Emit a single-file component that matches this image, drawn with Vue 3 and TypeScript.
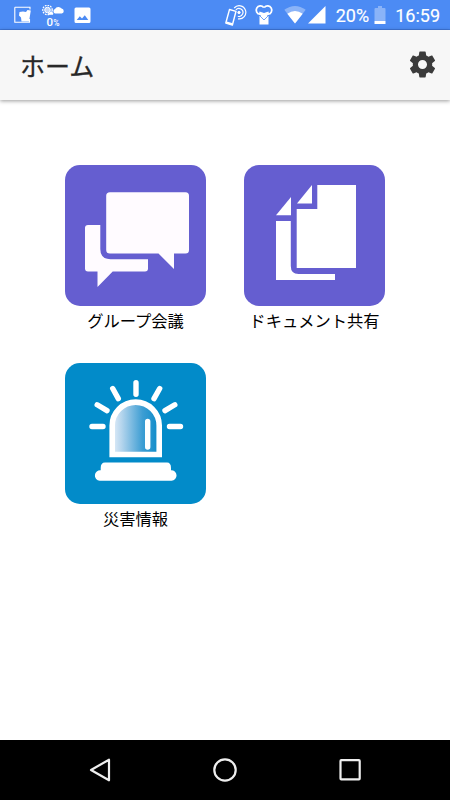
<script setup lang="ts">
interface Tile {
  id: 'meeting' | 'documents' | 'disaster'
  label: string
}

const title = 'ホーム'
const battery = '20%'
const clock = '16:59'
const tiles: Tile[] = [
  { id: 'meeting', label: 'グループ会議' },
  { id: 'documents', label: 'ドキュメント共有' },
  { id: 'disaster', label: '災害情報' },
]
</script>

<template>
  <div class="screen">
    <div class="status">
      <div class="status-left">
        <svg class="s-app" width="18" height="18" viewBox="0 0 18 18">
          <path d="M.8 1.200H16V3.500M.8 1.200V16.300H15.500V13" fill="none" stroke="#fff" stroke-width="1.100" />
          <path d="M5.500 6L9 5.500L12 6L13.500 4L16.800 4.500L15 15.500H7.500L7 11.500L5 9.500Z" fill="#fff" />
        </svg>
        <div class="weather">
          <svg width="22" height="12" viewBox="0 0 22 12">
            <circle cx="5.500" cy="5" r="4.700" fill="none" stroke="#fff" stroke-width="1.300" stroke-dasharray="1.700 1" />
            <circle cx="5.500" cy="5" r="2.800" fill="#fff" fill-opacity=".65" stroke="#fff" />
            <path d="M6 9.700a1.500 1.500 0 0 1 1.500-2a2 2 0 0 1 3.500 2z" fill="#fff" />
            <path d="M13 8.500a2.400 2.400 0 0 1 0-4.500a4 4 0 0 1 6.600-.4a2.500 2.500 0 0 1 .2 4.900z" fill="#fff" />
          </svg>
          <span class="rain">0<small>%</small></span>
        </div>
        <svg class="s-img" width="17" height="17" viewBox="0 0 17 17">
          <path fill="#fff" fill-rule="evenodd" d="M2 .5H15Q16.500 .5 16.500 2V14.500Q16.500 16 15 16H2Q.5 16 .5 14.500V2Q.5 .5 2 .5ZM2.700 13H14.300L10.800 8.200L8 11.600L5.800 9.200Z" />
        </svg>
      </div>
      <div class="status-right">
        <svg width="24" height="24" viewBox="0 0 24 24">
          <g fill="none" stroke="#fff">
            <path d="M5.500 4.500L12 6.300L8.400 20L1.800 18Z" stroke-width="1.400" stroke-linejoin="round" />
            <path d="M2.500 17.300L8.500 19.200" stroke-width="1.800" />
            <circle cx="15" cy="7.500" r="1.200" fill="#fff" />
            <path d="M11.800 5A4 4 0 1 1 13.800 11.300M10.200 3A6.600 6.600 0 1 1 14 13.800" stroke-width="1.200" />
          </g>
        </svg>
        <svg class="s-sync" width="20" height="24" viewBox="0 0 20 24">
          <g fill="none" stroke="#fff" stroke-width="1.800">
            <path d="M6 12.300A4.200 4.200 0 1 1 9.700 5.500M10.300 5.500A4.200 4.200 0 1 1 14 12.300" />
          </g>
          <path d="M5.500 14H14.500V22.500H5.500Z" fill="#fff" />
          <path d="M5.500 9.500L10 11L14.500 9.500L15 12L10 16.800L5 12Z" fill="#fff" />
          <path d="M4.800 12.800L10 18L15.200 12.800" fill="none" stroke="#4c8bf4" stroke-width=".8" />
        </svg>
        <svg class="s-wifi" width="22" height="18" viewBox="0 0 22 18">
          <path d="M.3 3.800Q11-3.800 21.700 3.800L11 17.500Z" fill="#fff" fill-opacity=".35" />
          <path d="M3.300 7.800Q11 2 18.700 7.800L11 17.500Z" fill="#fff" />
        </svg>
        <svg class="s-cell" width="18" height="18" viewBox="0 0 18 18"><path d="M17.500 0V17.500H0Z" fill="#fff" /></svg>
        <span class="pct">{{ battery }}</span>
        <svg class="s-bat" width="12" height="19" viewBox="0 0 12 19">
          <path d="M4 0H8V2H10.500Q11.500 2 11.500 3V15H.5V3Q.5 2 1.500 2H4Z" fill="#fff" fill-opacity=".35" />
          <path d="M.5 15H11.500V18H.5Z" fill="#fff" />
        </svg>
        <span class="clock">{{ clock }}</span>
      </div>
    </div>

    <header class="bar">
      <h1>{{ title }}</h1>
      <svg class="gear" width="31" height="31" viewBox="0 0 24 24">
        <path fill="#3b3b3b" d="M19.43 12.98c.04-.32.07-.64.07-.98s-.03-.66-.07-.98l2.11-1.65c.19-.15.24-.42.12-.64l-2-3.46c-.12-.22-.39-.3-.61-.22l-2.49 1c-.52-.4-1.08-.73-1.69-.98l-.38-2.65C14.46 2.18 14.25 2 14 2h-4c-.25 0-.46.18-.49.42l-.38 2.65c-.61.25-1.17.59-1.69.98l-2.49-1c-.23-.09-.49 0-.61.22l-2 3.46c-.13.22-.07.49.12.64l2.11 1.65c-.04.32-.07.65-.07.98s.03.66.07.98l-2.11 1.65c-.19.15-.24.42-.12.64l2 3.46c.12.22.39.3.61.22l2.49-1c.52.4 1.08.73 1.69.98l.38 2.65c.03.24.24.42.49.42h4c.25 0 .46-.18.49-.42l.38-2.65c.61-.25 1.17-.59 1.69-.98l2.49 1c.23.09.49 0 .61-.22l2-3.46c.12-.22.07-.49-.12-.64l-2.11-1.65zM12 15.500c-1.930 0-3.500-1.570-3.500-3.500s1.570-3.500 3.500-3.500 3.500 1.570 3.500 3.500-1.570 3.500-3.500 3.500z" />
      </svg>
    </header>

    <main class="grid">
      <div v-for="tile in tiles" :key="tile.id" class="item">
        <div class="tile" :class="tile.id">
          <svg v-if="tile.id === 'meeting'" width="141" height="141" viewBox="0 0 141 141">
            <g fill="#fffbff">
              <path d="M45 27.200H120.500Q124 27.200 124 30.700V85Q124 88.500 120.500 88.500H109V104L93.500 88.500H45Q41.200 88.500 41.200 85V30.700Q41.200 27.200 45 27.200Z" />
              <path d="M23 60H35.300V84Q35.300 94.200 45.500 94.200H83V103.500Q83 106.500 80 106.500H47.700L32.500 122V106.500H23Q20 106.500 20 103.500V63Q20 60 23 60Z" />
            </g>
          </svg>
          <svg v-else-if="tile.id === 'documents'" width="141" height="141" viewBox="0 0 141 141">
            <g fill="#fff">
              <path d="M73.300 20H112V103H52.700V44H73.300Z" />
              <path d="M68 20V38.500H53Z" />
              <path d="M47 32V50.200H32Z" />
              <path d="M32 56H46.800V101Q46.800 109 54.500 109H91V115H32Z" />
            </g>
          </svg>
          <svg v-else width="141" height="141" viewBox="0 0 141 141">
            <defs>
              <linearGradient id="lamp">
                <stop offset="0" stop-color="#e3eef9" />
                <stop offset=".2" stop-color="#b5d5ed" />
                <stop offset=".65" stop-color="#3c9dd3" />
                <stop offset="1" stop-color="#0b8bc9" />
              </linearGradient>
            </defs>
            <path d="M47.200 91.500V62.600a23.500 23.500 0 0 1 47 0V91.500Z" fill="url(#lamp)" stroke="#fff" stroke-width="5.600" />
            <g fill="none" stroke="#fff" stroke-width="5.400" stroke-linecap="round">
              <path d="M27 63.500H38M104.500 63.500H115.500M71 19.700V31.300M47.700 25.500L53.300 35.600M94.700 25.500L89 35.600M32.200 41.800L42 47.600M109.800 41.800L100 47.600M82.700 58.500V84" />
            </g>
            <path d="M40 99.500H102Q106 99.500 106 105V107.200A5.300 5.300 0 0 1 106.500 117.800H34.700A5.300 5.300 0 0 1 35.700 107.200V105Q35.700 99.500 40 99.500Z" fill="#fff" />
          </svg>
        </div>
        <span class="label">{{ tile.label }}</span>
      </div>
    </main>

    <nav class="nav">
      <svg width="30" height="30" viewBox="0 0 30 30"><path d="M6 15L24 4.700V25.300Z" /></svg>
      <svg width="30" height="30" viewBox="0 0 30 30"><circle cx="15" cy="15" r="10.700" /></svg>
      <svg width="30" height="30" viewBox="0 0 30 30"><rect x="5.500" y="5.200" width="19.200" height="19.200" rx=".8" /></svg>
    </nav>
  </div>
</template>

<style scoped>
.screen {
  width: 450px;
  height: 800px;
  display: flex;
  flex-direction: column;
  background: #fff;
  overflow: hidden;
  font-family: "Noto Sans CJK JP", sans-serif;
}
.screen svg {
  display: block;
  flex: none;
}
.status {
  height: 30px;
  flex: none;
  box-sizing: border-box;
  display: flex;
  justify-content: space-between;
  background: #4c8bf4;
  border-bottom: 1px solid #3f78dc;
  color: #fff;
  font-family: Roboto, sans-serif;
  padding: 0 10px 0 14px;
}
.status-left {
  display: flex;
  align-items: flex-start;
}
.s-app { margin-top: 6px; }
.weather {
  width: 22px;
  margin: 5px 0 0 10px;
  display: flex;
  flex-direction: column;
  align-items: center;
}
.rain {
  font-size: 11.5px;
  font-weight: 500;
  line-height: 10px;
}
.rain small { font-size: 8.5px; }
.s-img { margin: 7px 0 0 10px; }
.status-right {
  display: flex;
  align-items: flex-start;
}
.status-right svg { margin-top: 5px; }
.status-right .s-sync { margin: 2px 0 0 6px; }
.status-right .s-wifi { margin: 6px 0 0 10px; }
.status-right .s-cell { margin: 6px 0 0 2px; }
.pct, .clock {
  font-size: 18px;
  font-weight: 400;
  line-height: 32px;
  -webkit-text-stroke: 0.15px #fff;
}
.pct { margin-left: 10px; }
.status-right .s-bat { margin: 6px 0 0 5px; }
.clock { margin-left: 9px; }
.bar {
  height: 70px;
  flex: none;
  display: flex;
  align-items: center;
  justify-content: space-between;
  box-sizing: border-box;
  padding: 0 12px 1px 20px;
  background: #f7f7f7;
  box-shadow: 0 1px 4px rgba(0, 0, 0, 0.4);
}
h1 {
  margin: 0;
  font-size: 25px;
  font-weight: 400;
  line-height: 36px;
  color: #282828;
  -webkit-text-stroke: 0.3px #282828;
}
.grid {
  flex: 1;
  display: grid;
  grid-template-columns: 141px 141px;
  grid-auto-rows: 170px;
  column-gap: 38px;
  row-gap: 27.600px;
  padding: 65px 0 0 65px;
}
.item {
  display: flex;
  flex-direction: column;
  align-items: center;
}
.tile {
  width: 141px;
  height: 141px;
  border-radius: 15px;
  background: #655ed0;
  overflow: hidden;
}
.tile.disaster { background: #028bc9; }
.label {
  font-size: 16.3px;
  line-height: 24px;
  margin-top: 2px;
  color: #000;
  white-space: nowrap;
}
.nav {
  height: 60px;
  flex: none;
  box-sizing: border-box;
  display: flex;
  justify-content: space-between;
  align-items: center;
  padding: 0 85px;
  background: #000;
}
.nav svg {
  fill: none;
  stroke: #eee;
  stroke-width: 2.2;
  stroke-linejoin: round;
}
</style>

<style>
body { margin: 0; }
</style>
